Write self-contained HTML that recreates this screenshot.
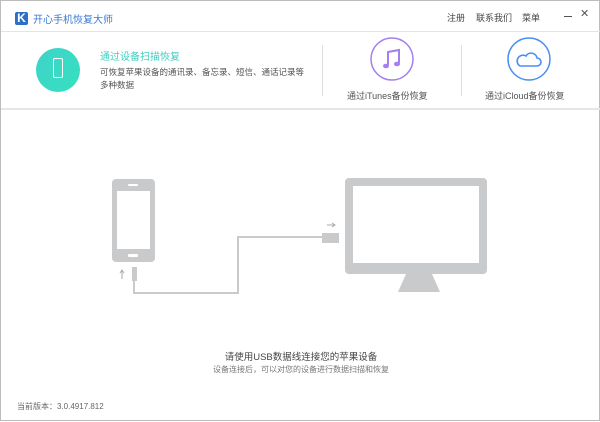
<!DOCTYPE html>
<html><head><meta charset="utf-8"><style>
*{margin:0;padding:0;box-sizing:border-box}
body{width:600px;height:421px;background:#fff;font-family:"Liberation Sans","Noto Sans CJK SC",sans-serif;position:relative;overflow:hidden;border:1px solid #bcbcbc}
.a{position:absolute;white-space:nowrap}
</style></head><body>
<div class="a" style="left:14px;top:11px;width:13px;height:13px;background:#2d6fc4;border-radius:2px;color:#fff;font-weight:bold;font-size:12px;line-height:13px;text-align:center">K</div>
<div class="a" style="left:32px;top:10px;font-size:10px;color:#3a7bd5">开心手机恢复大师</div>
<div class="a" style="left:446px;top:10px;font-size:9px;color:#444">注册</div>
<div class="a" style="left:475px;top:10px;font-size:9px;color:#444">联系我们</div>
<div class="a" style="left:521px;top:10px;font-size:9px;color:#444">菜单</div>
<div class="a" style="left:563px;top:15px;width:8px;height:1px;background:#555"></div>
<div class="a" style="left:579px;top:6px;font-size:11px;color:#555">✕</div>
<div class="a" style="left:0;top:30px;width:600px;height:1px;background:#e4e4e4"></div>
<div class="a" style="left:0;top:107px;width:600px;height:2px;background:#e6e6e6"></div>
<div class="a" style="left:35px;top:47px;width:44px;height:44px;border-radius:50%;background:linear-gradient(135deg,#3fd3c8,#35e0c0)"></div>
<div class="a" style="left:52px;top:57px;width:10px;height:20px;border:1.5px solid #fff;border-radius:2px"></div>
<div class="a" style="left:99px;top:47px;font-size:10px;color:#3ccfc0">通过设备扫描恢复</div>
<div class="a" style="left:99px;top:65px;font-size:8.5px;color:#555">可恢复苹果设备的通讯录、备忘录、短信、通话记录等</div>
<div class="a" style="left:99px;top:78px;font-size:8.5px;color:#555">多种数据</div>
<div class="a" style="left:321px;top:44px;width:1px;height:51px;background:#ddd"></div>
<div class="a" style="left:460px;top:44px;width:1px;height:51px;background:#ddd"></div>
<svg class="a" style="left:368px;top:36px" width="46" height="46"><circle cx="23" cy="22" r="21" fill="none" stroke="#a57ef0" stroke-width="1.5"/><path d="M19 28V15l11-2v13" fill="none" stroke="#a57ef0" stroke-width="2"/><ellipse cx="17" cy="29" rx="3" ry="2.3" fill="#a57ef0"/><ellipse cx="28" cy="27" rx="3" ry="2.3" fill="#a57ef0"/></svg>
<div class="a" style="left:346px;top:88px;font-size:9px;color:#555">通过iTunes备份恢复</div>
<svg class="a" style="left:505px;top:36px" width="46" height="46"><circle cx="23" cy="22" r="21" fill="none" stroke="#4a8ef5" stroke-width="1.5"/><path d="M14 29h17a4 4 0 0 0 0-8 6 6 0 0 0-11-2 5 5 0 0 0-6 10z" fill="none" stroke="#4a8ef5" stroke-width="1.6"/></svg>
<div class="a" style="left:484px;top:88px;font-size:9px;color:#555">通过iCloud备份恢复</div>
<svg class="a" style="left:0;top:0" width="600" height="421">
<g fill="#c9cacc">
<rect x="111" y="178" width="43" height="83" rx="4"/>
<rect x="131" y="266" width="5" height="14"/>
<rect x="321" y="232" width="17" height="10"/>
<rect x="344" y="177" width="142" height="96" rx="4"/>
<path d="M405 273h26l8 18h-42z"/>
</g>
<rect x="116" y="190" width="33" height="58" fill="#fff"/>
<rect x="127" y="183" width="10" height="2" fill="#fff" rx="1"/>
<rect x="127" y="253" width="10" height="3" fill="#fff" rx="1"/>
<rect x="352" y="185" width="126" height="77" fill="#fff"/>
<path d="M133 280v12h104v-56h84" fill="none" stroke="#c9cacc" stroke-width="2"/>
<path d="M121 278v-9m-2 3 2-3 2 3M326 224h8m-3-2 3 2-3 2" fill="none" stroke="#aaa" stroke-width="1"/>
</svg>
<div class="a" style="left:0;width:600px;top:348px;text-align:center;font-size:9.5px;color:#444">请使用USB数据线连接您的苹果设备</div>
<div class="a" style="left:0;width:600px;top:363px;text-align:center;font-size:8px;color:#777">设备连接后，可以对您的设备进行数据扫描和恢复</div>
<div class="a" style="left:16px;top:400px;font-size:8px;color:#666">当前版本：3.0.4917.812</div>
</body></html>
